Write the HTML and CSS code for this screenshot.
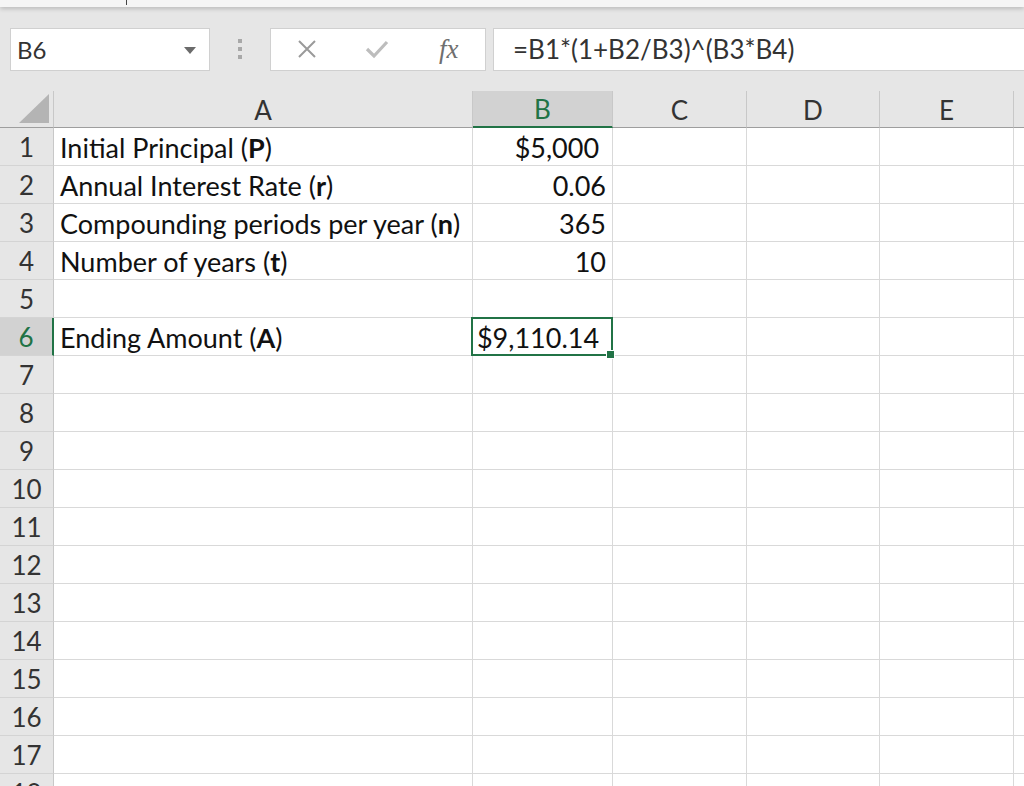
FILE: index.html
```html
<!DOCTYPE html>
<html>
<head>
<meta charset="utf-8">
<link rel="stylesheet" href="styles.css">
</head>
<body>
<div class="ribbon-edge"><span class="tick"></span></div>
<div class="formula-bar">
  <div class="namebox">
    <span class="name">B6</span>
    <svg class="caret" width="12" height="7" viewBox="0 0 12 7"><path d="M0 0 L12 0 L6 7 Z" fill="#6b6b6b"/></svg>
  </div>
  <div class="grip"><i></i><i></i><i></i></div>
  <div class="fnbox">
    <svg class="x" width="20" height="20" viewBox="0 0 20 20"><path d="M2 2 L18 18 M18 2 L2 18" stroke="#9a9a9a" stroke-width="2" fill="none"/></svg>
    <svg class="check" width="24" height="20" viewBox="0 0 24 20"><path d="M2 10 L9 17 L22 3" stroke="#bdbdbd" stroke-width="3.2" fill="none"/></svg>
    <span class="fx"><i>f</i><i>x</i></span>
  </div>
  <div class="formula">=B1*(1+B2/B3)^(B3*B4)</div>
</div>
<div class="sheet">
  <div class="corner"><span class="tri"></span></div>
  <div class="ch">A</div>
  <div class="ch sel">B</div>
  <div class="ch">C</div>
  <div class="ch">D</div>
  <div class="ch">E</div>
  <div class="ch last"></div>

  <div class="rh">1</div><div class="c">Initial Principal (<b>P</b>)</div><div class="c num">$5,000&nbsp;</div><div class="c"></div><div class="c"></div><div class="c"></div><div class="c last"></div>
  <div class="rh">2</div><div class="c">Annual Interest Rate (<b>r</b>)</div><div class="c num">0.06</div><div class="c"></div><div class="c"></div><div class="c"></div><div class="c last"></div>
  <div class="rh">3</div><div class="c">Compounding periods per year (<b>n</b>)</div><div class="c num">365</div><div class="c"></div><div class="c"></div><div class="c"></div><div class="c last"></div>
  <div class="rh">4</div><div class="c">Number of years (<b>t</b>)</div><div class="c num">10</div><div class="c"></div><div class="c"></div><div class="c"></div><div class="c last"></div>
  <div class="rh">5</div><div class="c"></div><div class="c"></div><div class="c"></div><div class="c"></div><div class="c"></div><div class="c last"></div>
  <div class="rh sel">6</div><div class="c">Ending Amount (<b>A</b>)</div><div class="c num active">$9,110.14&nbsp;</div><div class="c"></div><div class="c"></div><div class="c"></div><div class="c last"></div>
  <div class="rh">7</div><div class="c"></div><div class="c"></div><div class="c"></div><div class="c"></div><div class="c"></div><div class="c last"></div>
  <div class="rh">8</div><div class="c"></div><div class="c"></div><div class="c"></div><div class="c"></div><div class="c"></div><div class="c last"></div>
  <div class="rh">9</div><div class="c"></div><div class="c"></div><div class="c"></div><div class="c"></div><div class="c"></div><div class="c last"></div>
  <div class="rh">10</div><div class="c"></div><div class="c"></div><div class="c"></div><div class="c"></div><div class="c"></div><div class="c last"></div>
  <div class="rh">11</div><div class="c"></div><div class="c"></div><div class="c"></div><div class="c"></div><div class="c"></div><div class="c last"></div>
  <div class="rh">12</div><div class="c"></div><div class="c"></div><div class="c"></div><div class="c"></div><div class="c"></div><div class="c last"></div>
  <div class="rh">13</div><div class="c"></div><div class="c"></div><div class="c"></div><div class="c"></div><div class="c"></div><div class="c last"></div>
  <div class="rh">14</div><div class="c"></div><div class="c"></div><div class="c"></div><div class="c"></div><div class="c"></div><div class="c last"></div>
  <div class="rh">15</div><div class="c"></div><div class="c"></div><div class="c"></div><div class="c"></div><div class="c"></div><div class="c last"></div>
  <div class="rh">16</div><div class="c"></div><div class="c"></div><div class="c"></div><div class="c"></div><div class="c"></div><div class="c last"></div>
  <div class="rh">17</div><div class="c"></div><div class="c"></div><div class="c"></div><div class="c"></div><div class="c"></div><div class="c last"></div>
  <div class="rh">18</div><div class="c"></div><div class="c"></div><div class="c"></div><div class="c"></div><div class="c"></div><div class="c last"></div>
</div>
</body>
</html>
```
FILE: styles.css
```css
* { box-sizing: border-box; }
html, body { margin: 0; padding: 0; }
body {
  width: 1024px;
  height: 786px;
  overflow: hidden;
  background: #e6e6e6;
  font-family: "Lato", "Open Sans", sans-serif;
  color: #1a1a1a;
}
.ribbon-edge {
  height: 7px;
  background: #f5f5f5;
  box-shadow: 0 2px 4px rgba(0,0,0,0.18);
  position: relative;
}
.tick {
  position: absolute;
  left: 126px;
  top: 0;
  width: 1px;
  height: 5px;
  background: #444;
}
.formula-bar {
  display: flex;
  align-items: center;
  height: 84px;
  padding: 0 0 0 10px;
}
.namebox {
  width: 200px;
  height: 43px;
  background: #fff;
  border: 1px solid #d0d0d0;
  display: flex;
  align-items: center;
  justify-content: space-between;
  padding: 0 13px 0 6px;
}
.name { font-size: 24px; color: #333; }
.caret { margin-top: 2px; }
.grip {
  width: 60px;
  display: flex;
  flex-direction: column;
  align-items: center;
  gap: 4px;
}
.grip i {
  display: block;
  width: 4px;
  height: 4px;
  background: #a8a8a8;
}
.fnbox {
  width: 216px;
  height: 43px;
  background: #fff;
  border: 1px solid #d0d0d0;
  display: flex;
  align-items: center;
  padding: 0 0 0 26px;
}
.fnbox .x { margin-right: 48px; }
.fnbox .check { margin-right: 50px; }
.fx {
  font-family: "Liberation Serif", serif;
  font-style: italic;
  font-size: 27px;
  color: #6f6f6f;
}
.fx i { font-style: italic; }
.formula {
  flex: 1;
  height: 43px;
  margin-left: 7px;
  background: #fff;
  border: 1px solid #d0d0d0;
  border-right: none;
  display: flex;
  align-items: center;
  padding-left: 19px;
  font-size: 26px;
  color: #333;
}
.sheet {
  display: grid;
  grid-template-columns: 54px 419px 140px 134px 133px 134px 10px;
  grid-template-rows: 37px repeat(18, 38px);
  background: #fff;
}
.corner {
  background: #e6e6e6;
  border-right: 1px solid #c8c8c8;
  border-bottom: 1px solid #9e9e9e;
  position: relative;
}
.tri {
  position: absolute;
  right: 4px;
  bottom: 4px;
  width: 0;
  height: 0;
  border-left: 30px solid transparent;
  border-bottom: 29px solid #b4b4b4;
}
.ch {
  background: #e6e6e6;
  border-right: 1px solid #c8c8c8;
  border-bottom: 1px solid #9e9e9e;
  display: flex;
  align-items: center;
  justify-content: center;
  font-size: 26px;
  color: #333;
  padding-top: 1px;
}
.ch.sel {
  background: #d2d2d2;
  color: #217346;
  border-bottom: 2px solid #217346;
}
.ch.last { border-right: none; }
.rh {
  background: #e6e6e6;
  border-right: 1px solid #c8c8c8;
  border-bottom: 1px solid #d4d4d4;
  display: flex;
  align-items: center;
  justify-content: center;
  font-size: 26px;
  color: #333;
  font-variant-numeric: lining-nums;
}
.rh.sel {
  background: #d2d2d2;
  color: #217346;
  border-right: 2px solid #217346;
}
.c {
  border-right: 1px solid #d9d9d9;
  border-bottom: 1px solid #d9d9d9;
  display: flex;
  align-items: center;
  padding: 1px 6px 0 6px;
  font-size: 27px;
  color: #111;
  white-space: nowrap;
}
.c b { font-weight: 700; }
.c.num { justify-content: flex-end; }
.c.last { border-right: none; }
.c.active { position: relative; }
.c.active::after {
  content: "";
  position: absolute;
  left: -2px;
  top: -1px;
  right: -1px;
  bottom: -1px;
  border: 2px solid #217346;
}
.c.active::before {
  content: "";
  position: absolute;
  right: -3px;
  bottom: -4px;
  width: 7px;
  height: 7px;
  background: #217346;
  border: 1px solid #fff;
  z-index: 2;
}
```
